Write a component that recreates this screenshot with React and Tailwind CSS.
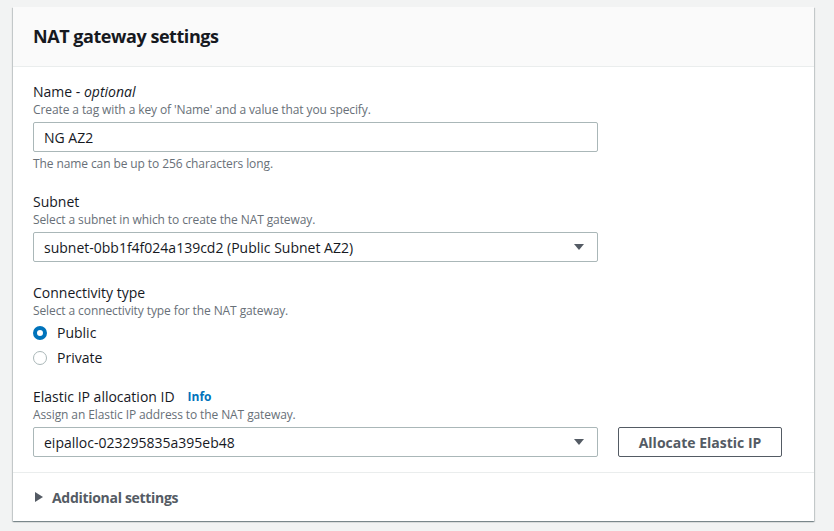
import React from 'react';

const font = { fontFamily: '"Open Sans", "Liberation Sans", sans-serif' };

const Caret = () => (
  <svg width="12" height="8" viewBox="0 0 12 8" className="shrink-0">
    <path d="M1 1h10L6 7z" fill="#545b64" />
  </svg>
);

const Field = ({ label, extra, desc, children, hint, className = '' }) => (
  <div className={`flex flex-col ${className}`}>
    <div className="flex items-center text-[14px] leading-[20px] text-[#16191f]">
      {label}
      {extra}
    </div>
    <div className="text-[12px] leading-[16px] text-[#687078] tracking-[-0.1px]">{desc}</div>
    <div className="mt-[4px]">{children}</div>
    {hint && (
      <div className="mt-[4px] text-[12px] leading-[16px] text-[#687078] tracking-[-0.1px]">{hint}</div>
    )}
  </div>
);

const Select = ({ value }) => (
  <div className="flex items-center justify-between w-[565px] h-[30px] border border-[#aab7b8] rounded-[2px] bg-white pl-[10px] pr-[12px] text-[14px] text-[#16191f]">
    <span>{value}</span>
    <Caret />
  </div>
);

const Radio = ({ checked, label }) => (
  <div className="flex items-center h-[25px] gap-[10px] text-[14px] text-[#16191f]">
    {checked ? (
      <span className="w-[14px] h-[14px] rounded-full border-[4px] border-[#0073bb] bg-white" />
    ) : (
      <span className="w-[14px] h-[14px] rounded-full border border-[#aab7b8] bg-white" />
    )}
    <span>{label}</span>
  </div>
);

export default function App() {
  return (
    <div className="min-h-[531px] bg-[#f2f3f3] pt-[7px] pl-[13px]" style={font}>
      <div className="w-[801px] bg-white shadow-[0_1px_1px_0_rgba(0,28,36,0.3),1px_1px_1px_0_rgba(0,28,36,0.15),-1px_1px_1px_0_rgba(0,28,36,0.15)]">
        {/* Header */}
        <div className="h-[60px] bg-[#fafafa] border-b border-[#eaeded] px-[20px] flex items-center">
          <h2 className="text-[18px] font-bold text-[#16191f] tracking-[-0.45px]">NAT gateway settings</h2>
        </div>

        {/* Body */}
        <div className="px-[20px] pt-[15px] pb-[15px] flex flex-col gap-[20px]">
          <Field
            label={
              <>
                Name -&nbsp;<i>optional</i>
              </>
            }
            desc="Create a tag with a key of 'Name' and a value that you specify."
            hint="The name can be up to 256 characters long."
          >
            <div className="flex items-center w-[565px] h-[30px] border border-[#aab7b8] rounded-[2px] px-[10px] text-[14px] text-[#16191f]">
              NG AZ2
            </div>
          </Field>

          <Field label="Subnet" desc="Select a subnet in which to create the NAT gateway.">
            <Select value="subnet-0bb1f4f024a139cd2 (Public Subnet AZ2)" />
          </Field>

          <Field label="Connectivity type" desc="Select a connectivity type for the NAT gateway." className="mt-[1px]">
            <div className="flex flex-col -mt-[3px]">
              <Radio checked label="Public" />
              <Radio label="Private" />
            </div>
          </Field>

          <Field
            label="Elastic IP allocation ID"
            extra={
              <span className="ml-[13px] text-[12px] font-bold text-[#0073bb]">Info</span>
            }
            desc="Assign an Elastic IP address to the NAT gateway."
            className="-mt-[3px]"
          >
            <div className="flex items-center gap-[20px]">
              <Select value="eipalloc-023295835a395eb48" />
              <button className="w-[164px] h-[30px] border border-[#545b64] rounded-[2px] text-[14px] font-bold text-[#545b64] bg-white">
                Allocate Elastic IP
              </button>
            </div>
          </Field>
        </div>

        {/* Footer */}
        <div className="border-t border-[#eaeded] h-[49px] px-[22px] flex items-center gap-[9px]">
          <svg width="8" height="10" viewBox="0 0 8 10">
            <path d="M0 0l8 5-8 5z" fill="#545b64" />
          </svg>
          <span className="text-[14px] font-bold text-[#545b64] tracking-[-0.3px]">Additional settings</span>
        </div>
      </div>
    </div>
  );
}
